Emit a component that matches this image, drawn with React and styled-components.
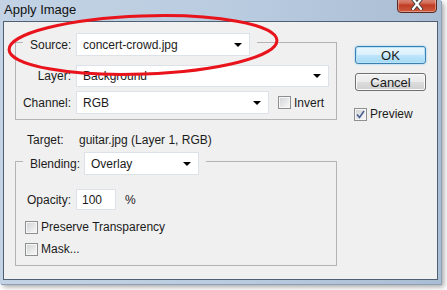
import React from 'react';
import styled, { createGlobalStyle } from 'styled-components';

const Global = createGlobalStyle`
  html, body {
    margin: 0;
    padding: 0;
    background: #fff;
  }
  body {
    font-family: "Liberation Sans", Arial, sans-serif;
    font-size: 12px;
    color: #1b1b1b;
  }
`;

const Stage = styled.div`
  position: relative;
  width: 447px;
  height: 290px;
  overflow: hidden;
  background: #fff;
`;

const Window = styled.div`
  width: 441px;
  height: 284px;
  box-sizing: border-box;
  padding: 0 3px 4px 3px;
  display: flex;
  flex-direction: column;
  background: linear-gradient(90deg, #c3d3e5 0%, #b9cbdf 55%, #a9bdd4 100%);
  box-shadow: 1px 1px 0 #8fa0b3, 3px 3px 5px rgba(0, 0, 0, 0.35);
`;

const TitleBar = styled.div`
  height: 21px;
  flex: none;
  display: flex;
  align-items: flex-start;
  justify-content: space-between;
  overflow: hidden;
`;

const Title = styled.span`
  font-size: 13px;
  line-height: 19px;
  padding-left: 1px;
  color: #111;
`;

const CloseButton = styled.div`
  width: 40px;
  height: 19px;
  margin-top: -6px;
  margin-right: 1px;
  box-sizing: border-box;
  border: 1px solid #5a2a22;
  border-radius: 0 0 4px 4px;
  background: linear-gradient(180deg, #e4a597 0%, #d4705d 45%, #c03d24 60%, #cf5b3e 100%);
  box-shadow: inset 0 0 0 1px rgba(255, 255, 255, 0.35);
  display: flex;
  align-items: center;
  justify-content: center;
`;

const Client = styled.div`
  flex: 1;
  display: flex;
  background: #f0f0f0;
  border: 1px solid #4f6073;
`;

const LeftCol = styled.div`
  width: 322px;
  margin: 20px 0 0 11px;
  display: flex;
  flex-direction: column;
`;

const RightCol = styled.div`
  display: flex;
  flex-direction: column;
  align-items: flex-start;
  margin: 24px 0 0 18px;
`;

const Group = styled.div`
  border: 1px solid #b4b4b4;
  margin-top: ${p => p.$mt || 0}px;
  padding-bottom: ${p => p.$pb}px;
`;

const Header = styled.div`
  display: flex;
  align-items: center;
  width: fit-content;
  margin: -10px 0 0 7px;
  padding: 0 7px;
  background: #f0f0f0;
`;

const Row = styled.div`
  display: flex;
  align-items: center;
  margin-top: ${p => p.$mt || 0}px;
  margin-left: ${p => p.$ml || 0}px;
  padding-left: ${p => p.$pl || 0}px;
`;

const Label = styled.span`
  width: ${p => p.$w}px;
  flex: none;
  text-align: ${p => p.$align || 'right'};
  margin-right: ${p => p.$gap ?? 5}px;
  padding-left: ${p => p.$pl || 0}px;
  white-space: nowrap;
`;

const Combo = styled.div`
  width: ${p => p.$w}px;
  height: ${p => p.$h || 23}px;
  box-sizing: border-box;
  background: #fff;
  border: 1px solid #dde2e8;
  display: flex;
  align-items: center;
  justify-content: space-between;
  padding: 0 7px 0 6px;
`;

const Arrow = styled.span`
  width: 0;
  height: 0;
  border-left: 4px solid transparent;
  border-right: 4px solid transparent;
  border-top: 4px solid #000;
`;

const Field = styled.div`
  width: 40px;
  height: 21px;
  box-sizing: border-box;
  background: #fff;
  border: 1px solid #dde2e8;
  padding-left: 5px;
  display: flex;
  align-items: center;
`;

const Box = styled.span`
  width: 13px;
  height: 13px;
  flex: none;
  box-sizing: border-box;
  border: 1px solid #8e8f8f;
  background: linear-gradient(135deg, #cfd1d4 0%, #eeeeee 70%, #fbfbfb 100%);
  box-shadow: inset 0 0 0 1px #f6f6f6;
  margin-right: 3px;
  display: flex;
  align-items: center;
  justify-content: center;
`;

const Check = ({ checked }) => (
  <Box>
    {checked && (
      <svg width="9" height="9" viewBox="0 0 9 9">
        <path d="M1 4.5 L3.5 7.5 L8 1" fill="none" stroke="#4a5e93" strokeWidth="1.6" />
      </svg>
    )}
  </Box>
);

const Button = styled.div`
  width: 71px;
  height: 18px;
  box-sizing: border-box;
  margin-bottom: ${p => p.$mb || 0}px;
  border: 1px solid ${p => (p.$primary ? '#3c7fb1' : '#707070')};
  border-radius: 3px;
  background: ${p =>
    p.$primary
      ? 'linear-gradient(180deg, #eaf6fd 0%, #d9f0fc 50%, #bee6fd 51%, #a7d9f5 100%)'
      : 'linear-gradient(180deg, #f2f2f2 0%, #ebebeb 50%, #dddddd 51%, #cfcfcf 100%)'};
  box-shadow: ${p => (p.$primary ? '0 0 2px #6ec8f2, inset 0 0 0 1px #b8e3f8' : 'inset 0 0 0 1px #fbfbfb')};
  display: flex;
  align-items: center;
  justify-content: center;
  font-size: 13px;
`;

const Ring = styled.svg`
  position: absolute;
  left: 0;
  top: 0;
  pointer-events: none;
`;

export default function App() {
  return (
    <Stage>
      <Global />
      <Window>
        <TitleBar>
          <Title>Apply Image</Title>
          <CloseButton>
            <svg width="14" height="12" viewBox="0 0 14 12">
              <path d="M3 1 L11 11 M11 1 L3 11" stroke="#3b3b3b" strokeWidth="4" strokeLinecap="round" />
              <path d="M3 1 L11 11 M11 1 L3 11" stroke="#fff" strokeWidth="2.2" strokeLinecap="round" />
            </svg>
          </CloseButton>
        </TitleBar>
        <Client>
          <LeftCol>
            <Group $pb={5}>
              <Header>
                <Label $w={41} $align="left">Source:</Label>
                <Combo $w={174}>concert-crowd.jpg<Arrow /></Combo>
              </Header>
              <Row $mt={9}>
                <Label $w={55}>Layer:</Label>
                <Combo $w={253} $h={22}>Background<Arrow /></Combo>
              </Row>
              <Row $mt={4}>
                <Label $w={55}>Channel:</Label>
                <Combo $w={193}>RGB<Arrow /></Combo>
                <Row $pl={9}>
                  <Check />
                  Invert
                </Row>
              </Row>
            </Group>

            <Row $mt={13} $pl={12}>
              <Label $w={52} $align="left" $gap={0}>Target:</Label>
              guitar.jpg (Layer 1, RGB)
            </Row>

            <Group $mt={14} $pb={9}>
              <Header>
                <Label $w={54} $align="left" $gap={0}>Blending:</Label>
                <Combo $w={115}>Overlay<Arrow /></Combo>
              </Header>
              <Row $mt={14}>
                <Label $w={55}>Opacity:</Label>
                <Field>100</Field>
                <Label $w={20} $align="left" $gap={0} $pl={9}>%</Label>
              </Row>
              <Row $mt={10} $pl={9}>
                <Check />
                Preserve Transparency
              </Row>
              <Row $mt={8} $pl={9}>
                <Check />
                Mask...
              </Row>
            </Group>
          </LeftCol>

          <RightCol>
            <Button $primary $mb={9}>OK</Button>
            <Button $mb={16}>Cancel</Button>
            <Row $ml={-1}>
              <Check checked />
              Preview
            </Row>
          </RightCol>
        </Client>
      </Window>
      <Ring width="447" height="290" viewBox="0 0 447 290">
        <ellipse
          cx="143"
          cy="45"
          rx="134"
          ry="29"
          fill="none"
          stroke="#e8131b"
          strokeWidth="3"
          transform="rotate(-2 143 45)"
        />
      </Ring>
    </Stage>
  );
}
